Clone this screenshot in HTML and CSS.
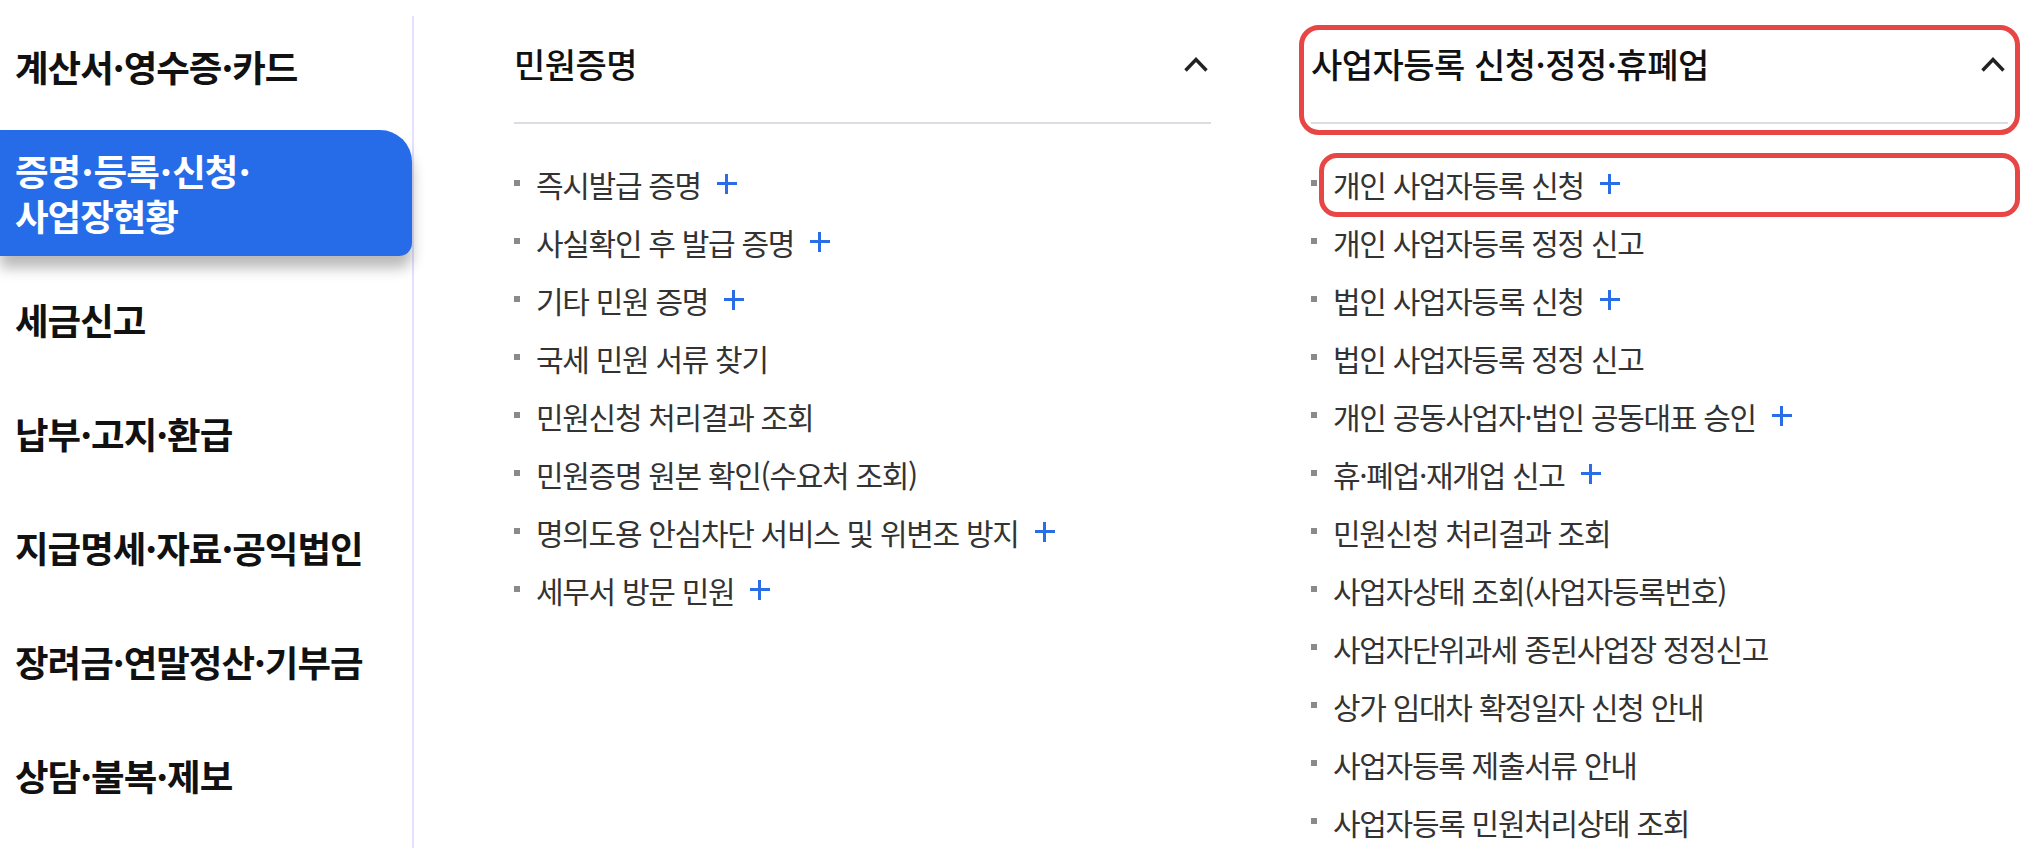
FILE: index.html
```html
<!DOCTYPE html>
<html lang="ko">
<head>
    <meta charset="UTF-8">
    <title>증명·등록·신청·사업장현황</title>
    <link rel="stylesheet" href="styles.css">
</head>
<body>
    <div class="wrap">
        <!-- Left menu -->
        <nav class="side">
            <ul class="side-list">
                <li class="side-item">계산서·영수증·카드</li>
                <li class="side-item on">증명&#8202;·&#8202;등록&#8202;·&#8202;신청&#8202;·<br>사업장현황</li>
                <li class="side-item">세금신고</li>
                <li class="side-item">납부·고지·환급</li>
                <li class="side-item">지급명세·자료·공익법인</li>
                <li class="side-item">장려금·연말정산·기부금</li>
                <li class="side-item">상담·불복·제보</li>
            </ul>
        </nav>

        <div class="content">
            <!-- 민원증명 -->
            <section class="col">
                <div class="col-head">
                    <h2 class="col-title">민원증명</h2>
                    <svg class="chev" width="24" height="15" viewBox="0 0 24 15"><path d="M1.5 13.5 L12 2.5 L22.5 13.5" fill="none" stroke="#222" stroke-width="3.4"/></svg>
                </div>
                <ul class="menu">
                    <li class="menu-item">즉시발급 증명<span class="plus"></span></li>
                    <li class="menu-item">사실확인 후 발급 증명<span class="plus"></span></li>
                    <li class="menu-item">기타 민원 증명<span class="plus"></span></li>
                    <li class="menu-item">국세 민원 서류 찾기</li>
                    <li class="menu-item">민원신청 처리결과 조회</li>
                    <li class="menu-item">민원증명 원본 확인(수요처 조회)</li>
                    <li class="menu-item">명의도용 안심차단 서비스 및 위변조 방지<span class="plus"></span></li>
                    <li class="menu-item">세무서 방문 민원<span class="plus"></span></li>
                </ul>
            </section>

            <!-- 사업자등록 -->
            <section class="col">
                <div class="col-head">
                    <h2 class="col-title">사업자등록 신청·정정·휴폐업</h2>
                    <svg class="chev" width="24" height="15" viewBox="0 0 24 15"><path d="M1.5 13.5 L12 2.5 L22.5 13.5" fill="none" stroke="#222" stroke-width="3.4"/></svg>
                </div>
                <ul class="menu">
                    <li class="menu-item">개인 사업자등록 신청<span class="plus"></span></li>
                    <li class="menu-item">개인 사업자등록 정정 신고</li>
                    <li class="menu-item">법인 사업자등록 신청<span class="plus"></span></li>
                    <li class="menu-item">법인 사업자등록 정정 신고</li>
                    <li class="menu-item">개인 공동사업자·법인 공동대표 승인<span class="plus"></span></li>
                    <li class="menu-item">휴·폐업·재개업 신고<span class="plus"></span></li>
                    <li class="menu-item">민원신청 처리결과 조회</li>
                    <li class="menu-item">사업자상태 조회(사업자등록번호)</li>
                    <li class="menu-item">사업자단위과세 종된사업장 정정신고</li>
                    <li class="menu-item">상가 임대차 확정일자 신청 안내</li>
                    <li class="menu-item">사업자등록 제출서류 안내</li>
                    <li class="menu-item">사업자등록 민원처리상태 조회</li>
                </ul>
                <!-- highlight marks -->
                <div class="mark mark-head"></div>
                <div class="mark mark-item"></div>
            </section>
        </div>
    </div>
</body>
</html>
```

FILE: styles.css
```css
* {
    margin: 0;
    padding: 0;
    box-sizing: border-box;
}

body {
    background: #fff;
    font-family: "Noto Sans CJK KR", "Noto Sans", sans-serif;
    overflow: hidden;
}

ul {
    list-style: none;
}

.wrap {
    display: flex;
    padding-top: 16px;
    height: 848px;
}

/* left menu */
.side {
    width: 414px;
    flex-shrink: 0;
    border-right: 2px solid #e3e1ff;
}

.side-list {
    display: flex;
    flex-direction: column;
    gap: 13px;
}

.side-item {
    padding: 28px 15px;
    font-size: 36.5px;
    font-weight: 700;
    line-height: 45px;
    letter-spacing: -1px;
    color: #111;
    white-space: nowrap;
}

.side-item.on {
    padding: 18px 15px;
    background: #266ce9;
    color: #fff;
    border-radius: 0 32px 13px 0;
    box-shadow: 0 12px 14px rgba(0,0,0,0.28);
}

/* columns */
.content {
    display: flex;
    gap: 100px;
    padding-left: 100px;
}

.col {
    position: relative;
    width: 697px;
}

.col-head {
    display: flex;
    justify-content: space-between;
    align-items: center;
    padding: 26px 3px 36px 0;
    border-bottom: 2px solid #dcdce2;
}

.col-title {
    font-size: 34px;
    font-weight: 500;
    line-height: 44px;
    letter-spacing: -0.5px;
    color: #111;
}

.menu {
    margin-top: 31px;
}

.menu-item {
    display: flex;
    align-items: center;
    height: 58px;
    font-size: 30px;
    letter-spacing: -1.3px;
    color: #333;
}

.menu-item::before {
    content: "";
    width: 6px;
    height: 6px;
    margin: -3px 16px 0 0;
    background: #8a8a8a;
}

.plus {
    position: relative;
    width: 20px;
    height: 20px;
    margin-left: 16px;
}

.plus::before,
.plus::after {
    content: "";
    position: absolute;
    background: #2a6de8;
}

.plus::before {
    left: 0;
    top: 8px;
    width: 20px;
    height: 3px;
}

.plus::after {
    left: 8px;
    top: 0;
    width: 3px;
    height: 20px;
}

/* red highlight marks */
.mark {
    position: absolute;
    border: 5px solid #e84545;
    border-radius: 20px;
}

.mark-head {
    left: -12px;
    right: -12px;
    top: 9px;
    height: 110px;
}

.mark-item {
    left: 8px;
    right: -12px;
    top: 137px;
    height: 64px;
    border-radius: 18px;
}
```
